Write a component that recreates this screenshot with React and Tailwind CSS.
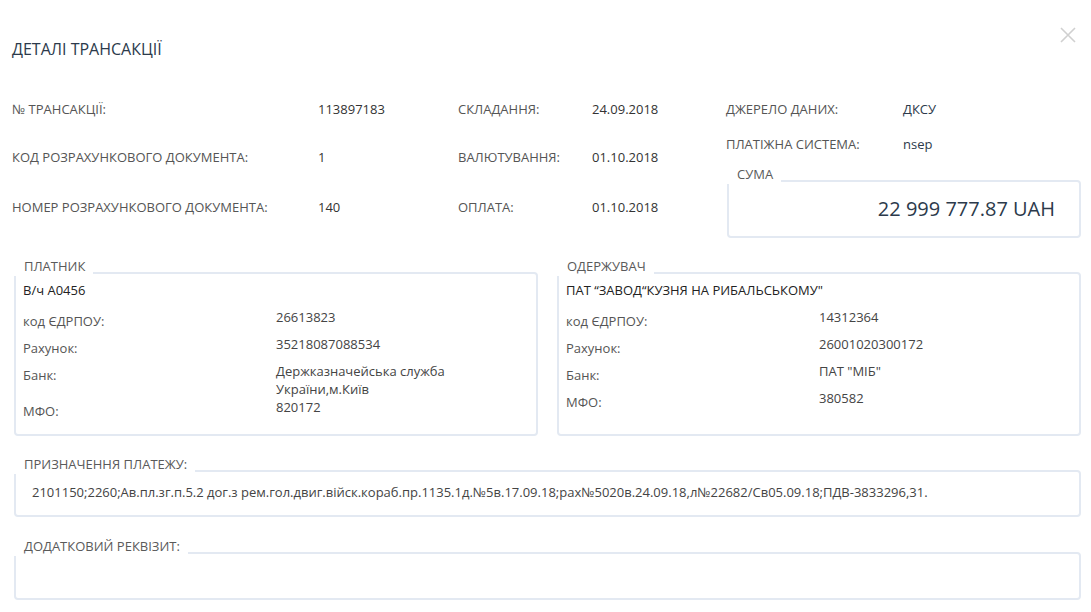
import React from "react";

const font = { fontFamily: '"Open Sans", "Noto Sans", sans-serif' };

function Legend({ children }) {
  return (
    <div className="absolute left-[-4px] top-[-18px] bg-white pl-[12px] pr-[8px] h-[20px] leading-[20px] text-[13px] text-[#5a5a5a]">
      {children}
    </div>
  );
}

function PartyRow({ label, value }) {
  return (
    <div className="flex min-h-[27px]">
      <div className="w-[253px] pt-[4px] text-[13px] leading-[18px] text-[#555]">{label}</div>
      <div className="text-[13px] leading-[18px] text-[#444]">{value}</div>
    </div>
  );
}

function Party({ title, name, rows }) {
  return (
    <div className="relative flex-1 h-[164px] border-2 border-[#e3e9f2] rounded-[4px] pt-[7px] pl-[7px]">
      <Legend>{title}</Legend>
      <div className="text-[13px] leading-[18px] font-medium text-[#222] mb-[9px]">{name}</div>
      {rows.map((r, i) => (
        <PartyRow key={i} label={r[0]} value={r[1]} />
      ))}
    </div>
  );
}

export default function App() {
  return (
    <div className="relative w-[1091px] h-[612px] bg-white overflow-hidden pl-[12px] pr-[10px]" style={font}>
      <div className="absolute left-[1060px] top-[27px] w-[16px] h-[16px]">
        <svg viewBox="0 0 16 16" width="16" height="16">
          <path d="M1 1 L15 15 M15 1 L1 15" stroke="#d0d0d0" strokeWidth="1.6" fill="none" />
        </svg>
      </div>
      <div className="pt-[39px] h-[86px]">
        <div className="text-[16px] leading-[20px] text-[#2c3a4b]">ДЕТАЛІ ТРАНСАКЦІЇ</div>
      </div>

      <div className="flex">
        <div className="w-[446px]">
          <div className="flex items-center h-[48px]">
            <div className="w-[306px] text-[13px] text-[#555]">№ ТРАНСАКЦІЇ:</div>
            <div className="text-[13px] text-[#333]">113897183</div>
          </div>
          <div className="flex items-center h-[48px]">
            <div className="w-[306px] text-[13px] text-[#555]">КОД РОЗРАХУНКОВОГО ДОКУМЕНТА:</div>
            <div className="text-[13px] text-[#333]">1</div>
          </div>
          <div className="flex items-center h-[52px]">
            <div className="w-[306px] text-[13px] text-[#555]">НОМЕР РОЗРАХУНКОВОГО ДОКУМЕНТА:</div>
            <div className="text-[13px] text-[#333]">140</div>
          </div>
        </div>
        <div className="w-[268px]">
          <div className="flex items-center h-[48px]">
            <div className="w-[134px] text-[13px] text-[#555]">СКЛАДАННЯ:</div>
            <div className="text-[13px] text-[#333]">24.09.2018</div>
          </div>
          <div className="flex items-center h-[48px]">
            <div className="w-[134px] text-[13px] text-[#555]">ВАЛЮТУВАННЯ:</div>
            <div className="text-[13px] text-[#333]">01.10.2018</div>
          </div>
          <div className="flex items-center h-[52px]">
            <div className="w-[134px] text-[13px] text-[#555]">ОПЛАТА:</div>
            <div className="text-[13px] text-[#333]">01.10.2018</div>
          </div>
        </div>
        <div className="flex-1">
          <div className="flex items-center h-[48px]">
            <div className="w-[177px] text-[13px] text-[#555]">ДЖЕРЕЛО ДАНИХ:</div>
            <div className="text-[13px] text-[#2c3a4b]">ДКСУ</div>
          </div>
          <div className="flex items-center h-[22px]">
            <div className="w-[177px] text-[13px] text-[#555]">ПЛАТІЖНА СИСТЕМА:</div>
            <div className="text-[13px] text-[#2c3a4b]">nsep</div>
          </div>
          <div className="relative mt-[24px] ml-[1px] h-[58px] border-2 border-[#e3e9f2] rounded-[4px] flex items-center justify-end pr-[24px]">
            <Legend>СУМА</Legend>
            <div className="text-[20px] leading-[26px] text-[#2c3a4b]">22 999 777.87 UAH</div>
          </div>
        </div>
      </div>

      <div className="flex gap-[19px] mt-[34px] pl-[2px]">
        <Party
          title="ПЛАТНИК"
          name="В/ч А0456"
          rows={[
            ["код ЄДРПОУ:", "26613823"],
            ["Рахунок:", "35218087088534"],
            ["Банк:", <>Держказначейська служба<br />України,м.Київ</>],
            ["МФО:", "820172"],
          ]}
        />
        <Party
          title="ОДЕРЖУВАЧ"
          name={"ПАТ “ЗАВОД“КУЗНЯ НА РИБАЛЬСЬКОМУ\""}
          rows={[
            ["код ЄДРПОУ:", "14312364"],
            ["Рахунок:", "26001020300172"],
            ["Банк:", "ПАТ \"МІБ\""],
            ["МФО:", "380582"],
          ]}
        />
      </div>

      <div className="relative mt-[34px] ml-[2px] h-[47px] border-2 border-[#e3e9f2] rounded-[4px] pl-[16px] pt-[11px]">
        <Legend>ПРИЗНАЧЕННЯ ПЛАТЕЖУ:</Legend>
        <div className="text-[13px] leading-[18px] text-[#444]">
          2101150;2260;Ав.пл.зг.п.5.2 дог.з рем.гол.двиг.війск.кораб.пр.1135.1д.№5в.17.09.18;рах№5020в.24.09.18,л№22682/Св05.09.18;ПДВ-3833296,31.
        </div>
      </div>

      <div className="relative mt-[35px] ml-[2px] h-[48px] border-2 border-[#e3e9f2] rounded-[4px]">
        <Legend>ДОДАТКОВИЙ РЕКВІЗИТ:</Legend>
      </div>
    </div>
  );
}
